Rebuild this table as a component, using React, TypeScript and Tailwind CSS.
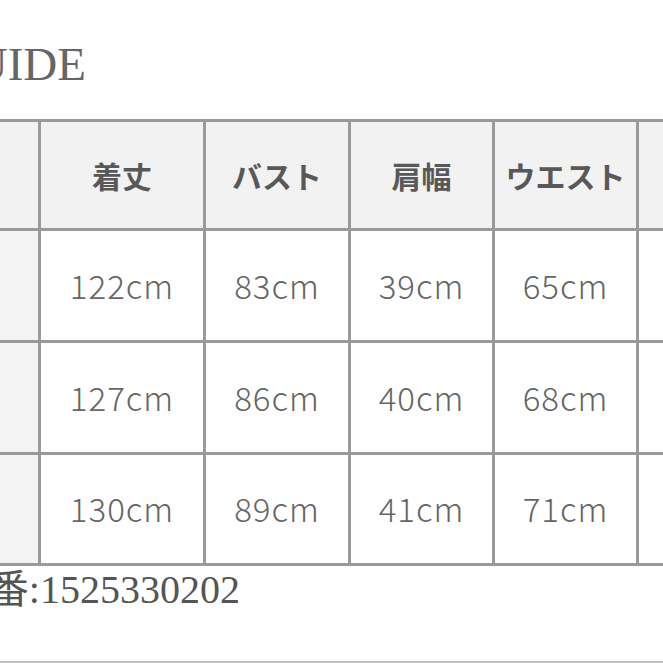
import React from "react";

const headers = ["着丈", "バスト", "肩幅", "ウエスト"];

const rows = [
  ["122cm", "83cm", "39cm", "65cm"],
  ["127cm", "86cm", "40cm", "68cm"],
  ["130cm", "89cm", "41cm", "71cm"],
];

const serif = { fontFamily: '"Liberation Serif", "Noto Sans CJK JP", serif' };
const gothic = { fontFamily: '"Noto Sans CJK JP", sans-serif' };

const SizeGuide = () => {
  return (
    <div className="w-[663px] h-[663px] overflow-hidden bg-white flex flex-col">
      {/* Title, left part runs off the page */}
      <div className="mt-[41px] w-[86px] flex justify-end whitespace-nowrap">
        <h1 className="text-[47px] leading-none text-[#666]" style={serif}>
          SIZE GUIDE
        </h1>
      </div>

      {/* Table */}
      <div
        className="mt-[31px] -ml-[80px] w-max grid grid-cols-[118px_162px_142px_141px_141px_120px] grid-rows-[106px_109px_109px_108px] gap-[3px] py-[3px] bg-[#9a9a9a]"
        style={gothic}
      >
        <div className="bg-[#f2f2f2]" />
        {headers.map((h) => (
          <div
            key={h}
            className="bg-[#f2f2f2] flex items-center justify-center text-[30px] font-bold text-[#585858]"
          >
            {h}
          </div>
        ))}
        <div className="bg-[#f2f2f2]" />

        {rows.map((row, i) => (
          <React.Fragment key={i}>
            <div className="bg-[#f3f3f3]" />
            {row.map((v, j) => (
              <div
                key={j}
                className="bg-white flex items-center justify-center text-[33px] font-light tracking-[1px] text-[#666]"
              >
                {v}
              </div>
            ))}
            <div className="bg-white" />
          </React.Fragment>
        ))}
      </div>

      {/* Product number */}
      <div className="mt-[4px] w-[240px] flex justify-end whitespace-nowrap">
        <p className="text-[40px] leading-none text-[#555]" style={serif}>
          品番:1525330202
        </p>
      </div>

      <div className="mt-auto h-[2px] bg-[#c2c2c2]" />
    </div>
  );
};

export default SizeGuide;
